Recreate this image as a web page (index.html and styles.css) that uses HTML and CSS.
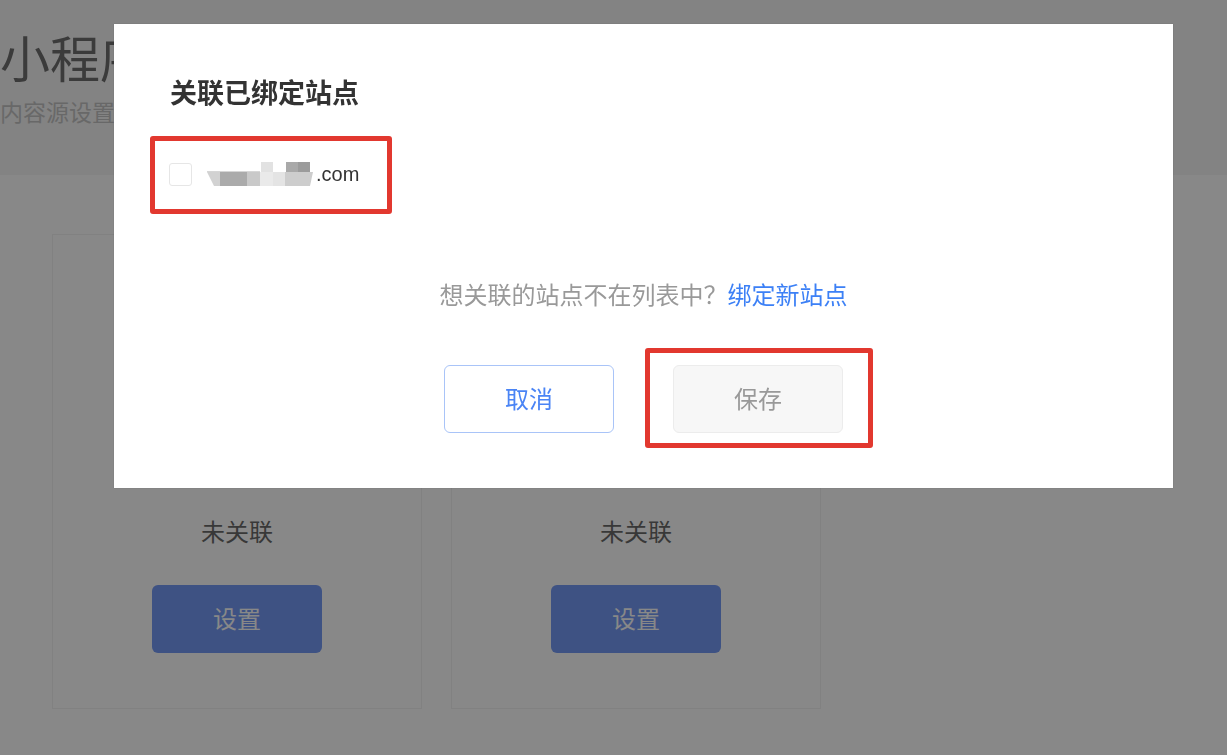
FILE: index.html
```html
<!DOCTYPE html>
<html lang="zh-CN">

<head>
  <meta charset="utf-8">
  <title>小程序</title>
  <link rel="stylesheet" href="styles.css">
</head>

<body>

  <div class="page">
    <header class="page-head">
      <h1>小程序</h1>
      <p>内容源设置</p>
    </header>

    <main class="sources">
      <section class="source-card">
        <p class="source-state">未关联</p>
        <button type="button" class="btn-setup">设置</button>
      </section>
      <section class="source-card">
        <p class="source-state">未关联</p>
        <button type="button" class="btn-setup">设置</button>
      </section>
    </main>
  </div>

  <!-- dimmed backdrop behind the dialog -->
  <div class="mask"></div>

  <div class="dialog" role="dialog">
    <h2 class="dialog-title">关联已绑定站点</h2>

    <label class="site mark">
      <span class="check"></span>
      <!-- the real domain is pixelated in the screenshot -->
      <svg class="site-blur" width="106" height="24" viewBox="0 0 106 24">
        <rect x="54" y="0" width="12" height="10" fill="#e2e2e2" />
        <rect x="79" y="0" width="12" height="10" fill="#a9a9a9" />
        <rect x="91" y="0" width="12" height="10" fill="#9b9b9b" />
        <rect x="0" y="9" width="53" height="1" fill="#d6d6d6" />
        <polygon points="0,10 13,10 13,24 7,24" fill="#d2d2d2" />
        <rect x="13" y="10" width="27" height="14" fill="#ababab" />
        <rect x="40" y="10" width="13" height="14" fill="#c9c9c9" />
        <rect x="53" y="10" width="13" height="14" fill="#eaeaea" />
        <rect x="66" y="10" width="12" height="14" fill="#e4e4e4" />
        <polygon points="78,10 106,10 103,24 78,24" fill="#cdcdcd" />
      </svg>
      <span class="site-name">.com</span>
    </label>

    <p class="dialog-hint">想关联的站点不在列表中？<a href="#">绑定新站点</a></p>

    <div class="dialog-actions">
      <button type="button" class="btn btn-cancel">取消</button>
      <span class="mark mark-save">
        <button type="button" class="btn btn-save">保存</button>
      </span>
    </div>
  </div>

</body>

</html>
```

FILE: styles.css
```css
html,
body {
  margin: 0;
  height: 100%;
  overflow: hidden;
}

body {
  background: #fff;
  font-family: "Liberation Sans", "Noto Sans CJK SC", sans-serif;
  color: #333;
}

/* Page behind the mask */
.page-head {
  height: 175px;
  box-sizing: border-box;
  padding-top: 31px;
  background: #f6f6f6;
}

.page-head h1 {
  margin: 0;
  font-size: 50px;
  line-height: 60px;
  font-weight: 400;
  color: #707070;
}

.page-head p {
  margin: 7px 0 0;
  font-size: 23px;
  line-height: 30px;
  color: #c4c4c4;
}

.sources {
  display: flex;
  gap: 29px;
  padding: 59px 0 0 52px;
}

.source-card {
  width: 370px;
  height: 475px;
  box-sizing: border-box;
  border: 1px solid #f2f2f2;
  display: flex;
  flex-direction: column;
  align-items: center;
  padding-top: 281px;
}

.source-state {
  margin: 0;
  font-size: 24px;
  line-height: 34px;
  color: #6a6a6a;
}

.btn-setup {
  margin-top: 35px;
  width: 170px;
  height: 68px;
  padding: 0 0 4px;
  border: 0;
  border-radius: 6px;
  background: #749af6;
  color: #fff;
  font: inherit;
  font-size: 24px;
}

.mask {
  position: fixed;
  inset: 0;
  background: rgba(0, 0, 0, 0.467);
}

/* Dialog */
.dialog {
  position: fixed;
  left: 114px;
  top: 24px;
  width: 1059px;
  height: 464px;
  box-sizing: border-box;
  padding: 52px 56px 0;
  background: #fff;
  box-shadow: 0 0 1px rgba(0, 0, 0, 0.25);
  display: flex;
  flex-direction: column;
  align-items: flex-start;
}

.dialog-title {
  margin: 0;
  font-size: 27px;
  line-height: 36px;
  font-weight: 700;
  color: #333;
}

/* red annotation frames */
.mark {
  border: 5px solid #e2382f;
  border-radius: 3px;
}

.site {
  margin: 24px 0 0 -20px;
  display: inline-flex;
  align-items: center;
  padding: 21px 28px 23px 14px;
}

.check {
  width: 23px;
  height: 23px;
  box-sizing: border-box;
  border: 1px solid #e6e6e6;
  border-radius: 3px;
}

.site-blur {
  display: block;
  margin-left: 15px;
}

.site-name {
  margin-left: 3px;
  font-size: 20px;
  line-height: 22px;
  color: #333;
}

.dialog-hint {
  align-self: stretch;
  margin: 65px 0 0;
  text-align: center;
  font-size: 24px;
  line-height: 34px;
  color: #999;
}

.dialog-hint a {
  color: #3c80f6;
  text-decoration: none;
}

.dialog-actions {
  align-self: stretch;
  margin-top: 52px;
  display: flex;
  justify-content: center;
  gap: 59px;
}

.btn {
  width: 170px;
  height: 68px;
  padding: 0 0 4px;
  box-sizing: border-box;
  border-radius: 6px;
  font: inherit;
  font-size: 24px;
}

.btn-cancel {
  background: #fff;
  border: 1px solid #a9c4f8;
  color: #4a84f5;
}

.btn-save {
  display: block;
  background: #f7f7f7;
  border: 1px solid #ececec;
  color: #999;
}

/* frame sits around the button without moving it */
.mark-save {
  display: block;
  margin: -17px -30px -15px -28px;
  padding: 12px 25px 10px 23px;
}
```
